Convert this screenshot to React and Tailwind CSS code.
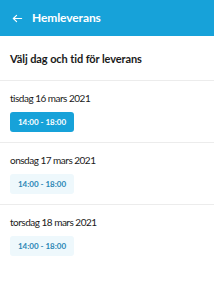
import React from 'react';

const days = [
  { label: 'tisdag 16 mars 2021', slot: '14:00 - 18:00', selected: true },
  { label: 'onsdag 17 mars 2021', slot: '14:00 - 18:00', selected: false },
  { label: 'torsdag 18 mars 2021', slot: '14:00 - 18:00', selected: false },
];

function App() {
  return (
    <div className="w-[214px] h-[300px] bg-white overflow-hidden font-['Lato',sans-serif] text-[#1a1a1a]">
      {/* Top bar */}
      <div className="h-[36px] bg-[#17a2d9] flex items-center pl-[12px] gap-[9px] text-white">
        <svg width="11" height="11" viewBox="0 0 24 24" fill="none" stroke="currentColor" strokeWidth="2.5" strokeLinecap="round" strokeLinejoin="round">
          <path d="M21 12H3" />
          <path d="M10 5l-7 7 7 7" />
        </svg>
        <span className="text-[12px] font-bold tracking-[-0.1px]">Hemleverans</span>
      </div>

      {/* Title */}
      <div className="h-[45px] flex items-center px-[10px] border-b border-[#ececec] pt-[2px]">
        <h1 className="text-[11px] font-bold tracking-[-0.1px]">Välj dag och tid för leverans</h1>
      </div>

      {days.map((day) => (
        <div key={day.label} className="px-[10px] pt-[10px] pb-[10px] border-b border-[#ececec] last:border-b-0">
          <p className="text-[10px] leading-[14px] tracking-[-0.5px]">{day.label}</p>
          <button
            className={
              day.selected
                ? 'mt-[7px] w-[64px] h-[20px] rounded-[3px] bg-[#17a2d9] text-white text-[8px] font-bold'
                : 'mt-[7px] w-[64px] h-[20px] rounded-[3px] bg-[#eef8fc] text-[#2a86b5] text-[8px] font-bold'
            }
          >
            {day.slot}
          </button>
        </div>
      ))}
    </div>
  );
}

export default App;
